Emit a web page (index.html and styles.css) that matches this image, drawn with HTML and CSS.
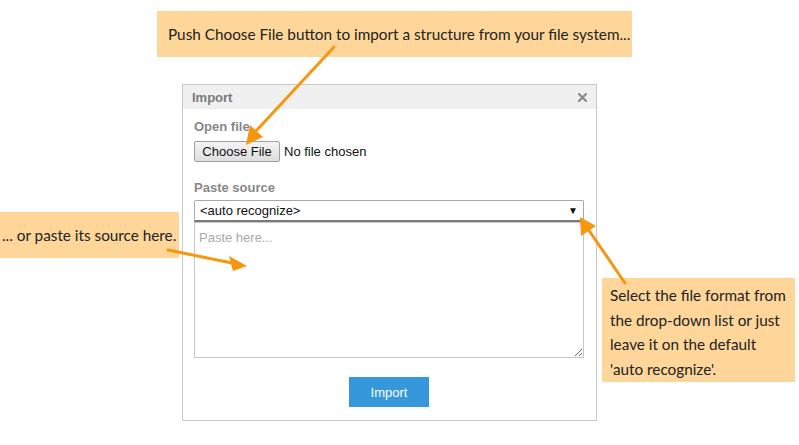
FILE: index.html
```html
<!DOCTYPE html>
<html>
<head>
<meta charset="utf-8">
<link rel="stylesheet" href="styles.css">
</head>
<body>
<div class="stage">
  <div class="dialog">
    <div class="dlg-head">
      <span class="dlg-title">Import</span>
      <svg class="dlg-close" width="9" height="9" viewBox="0 0 9 9"><path d="M1 1L8 8M8 1L1 8" stroke="#8a8a8a" stroke-width="2.2" stroke-linecap="square"/></svg>
    </div>
    <div class="dlg-body">
      <div class="label">Open file</div>
      <div class="file-row">
        <button class="file-btn">Choose File</button>
        <span class="file-name">No file chosen</span>
      </div>
      <div class="label label-paste">Paste source</div>
      <div class="select"><span>&lt;auto recognize&gt;</span><span class="caret">▼</span></div>
      <textarea class="paste" placeholder="Paste here..."></textarea>
      <div class="actions"><button class="import-btn">Import</button></div>
    </div>
  </div>

  <div class="note note-top">Push Choose File button to import a structure from your file system...</div>
  <div class="note note-left">... or paste its source here.</div>
  <div class="note note-right">Select the file format from<br>the drop-down list or just<br>leave it on the default<br>'auto recognize'.</div>

  <svg class="arrows" width="799" height="445" viewBox="0 0 799 445">
    <g stroke="#f7960f" stroke-width="3" fill="none" stroke-linecap="round">
      <line x1="334" y1="47" x2="256" y2="131"/>
      <line x1="168" y1="250" x2="232" y2="263"/>
      <line x1="625" y1="283" x2="588" y2="229"/>
    </g>
    <g fill="#f7960f">
      <polygon points="246,145 250,125 263,137"/>
      <polygon points="247,266 229,256 233,271"/>
      <polygon points="580,217 581,236 596,226"/>
    </g>
  </svg>
</div>
</body>
</html>
```
FILE: styles.css
```css
html, body {
  margin: 0;
  padding: 0;
  background: #fff;
}
.stage {
  position: relative;
  width: 799px;
  height: 445px;
  overflow: hidden;
  padding-top: 84px;
  box-sizing: border-box;
  font-family: "Liberation Sans", Arial, sans-serif;
}
.dialog {
  margin-left: 182px;
  width: 415px;
  height: 337px;
  box-sizing: border-box;
  border: 1px solid #c8c8c8;
  display: flex;
  flex-direction: column;
}
.dlg-head {
  height: 24px;
  background: #f0f0f0;
  display: flex;
  align-items: center;
  justify-content: space-between;
  padding: 0 9px 0 9px;
}
.dlg-title {
  font-size: 13px;
  font-weight: bold;
  color: #7a7a7a;
}
.dlg-close {
  display: block;
}
.dlg-body {
  padding: 10px 12px 0 11px;
  display: flex;
  flex-direction: column;
}
.label {
  font-size: 13px;
  font-weight: bold;
  color: #888;
  line-height: 16px;
  height: 16px;
}
.file-row {
  margin-top: 6px;
  display: flex;
  align-items: center;
  height: 21px;
}
.file-btn {
  font-family: "Liberation Sans", Arial, sans-serif;
  font-size: 13px;
  height: 21px;
  width: 86px;
  padding: 0;
  border: 1px solid #a0a0a0;
  border-radius: 2px;
  background: linear-gradient(#f4f4f4, #dedede);
  color: #111;
}
.file-name {
  margin-left: 4px;
  font-size: 13px;
  color: #111;
}
.label-paste {
  margin-top: 18px;
  margin-bottom: 4px;
}
.select {
  height: 22px;
  box-sizing: border-box;
  border: 1px solid #a9a9a9;
  border-bottom: 2px solid #7a7a7a;
  border-radius: 2px 2px 0 0;
  display: flex;
  align-items: center;
  justify-content: space-between;
  padding: 0 5px 0 5px;
  font-size: 13px;
  color: #111;
}
.caret {
  font-size: 10px;
  color: #111;
}
.paste {
  display: block;
  margin: 0;
  height: 136px;
  box-sizing: border-box;
  border: 1px solid #c8c8c8;
  padding: 7px 4px;
  font-family: "Liberation Sans", Arial, sans-serif;
  font-size: 13px;
  resize: vertical;
  outline: none;
}
.paste::placeholder {
  color: #aaa;
}
.actions {
  margin-top: 19px;
  display: flex;
  justify-content: center;
}
.import-btn {
  width: 80px;
  height: 30px;
  border: none;
  background: #3598db;
  color: #fff;
  font-family: "Liberation Sans", Arial, sans-serif;
  font-size: 13px;
  padding: 0;
}
.note {
  position: absolute;
  background: #fed699;
  color: #222;
  font-family: Lato, "Open Sans", sans-serif;
  font-size: 15.3px;
  box-sizing: border-box;
  white-space: nowrap;
}
.note-top {
  left: 157px;
  top: 11px;
  width: 475px;
  height: 46px;
  line-height: 46px;
  padding-left: 11px;
}
.note-left {
  left: 0;
  top: 212px;
  width: 179px;
  height: 46px;
  line-height: 46px;
  padding-left: 2px;
}
.note-right {
  left: 602px;
  top: 278px;
  width: 193px;
  height: 104px;
  padding: 5px 8px 0 8px;
  line-height: 24.5px;
}
.arrows {
  position: absolute;
  left: 0;
  top: 0;
}
```
